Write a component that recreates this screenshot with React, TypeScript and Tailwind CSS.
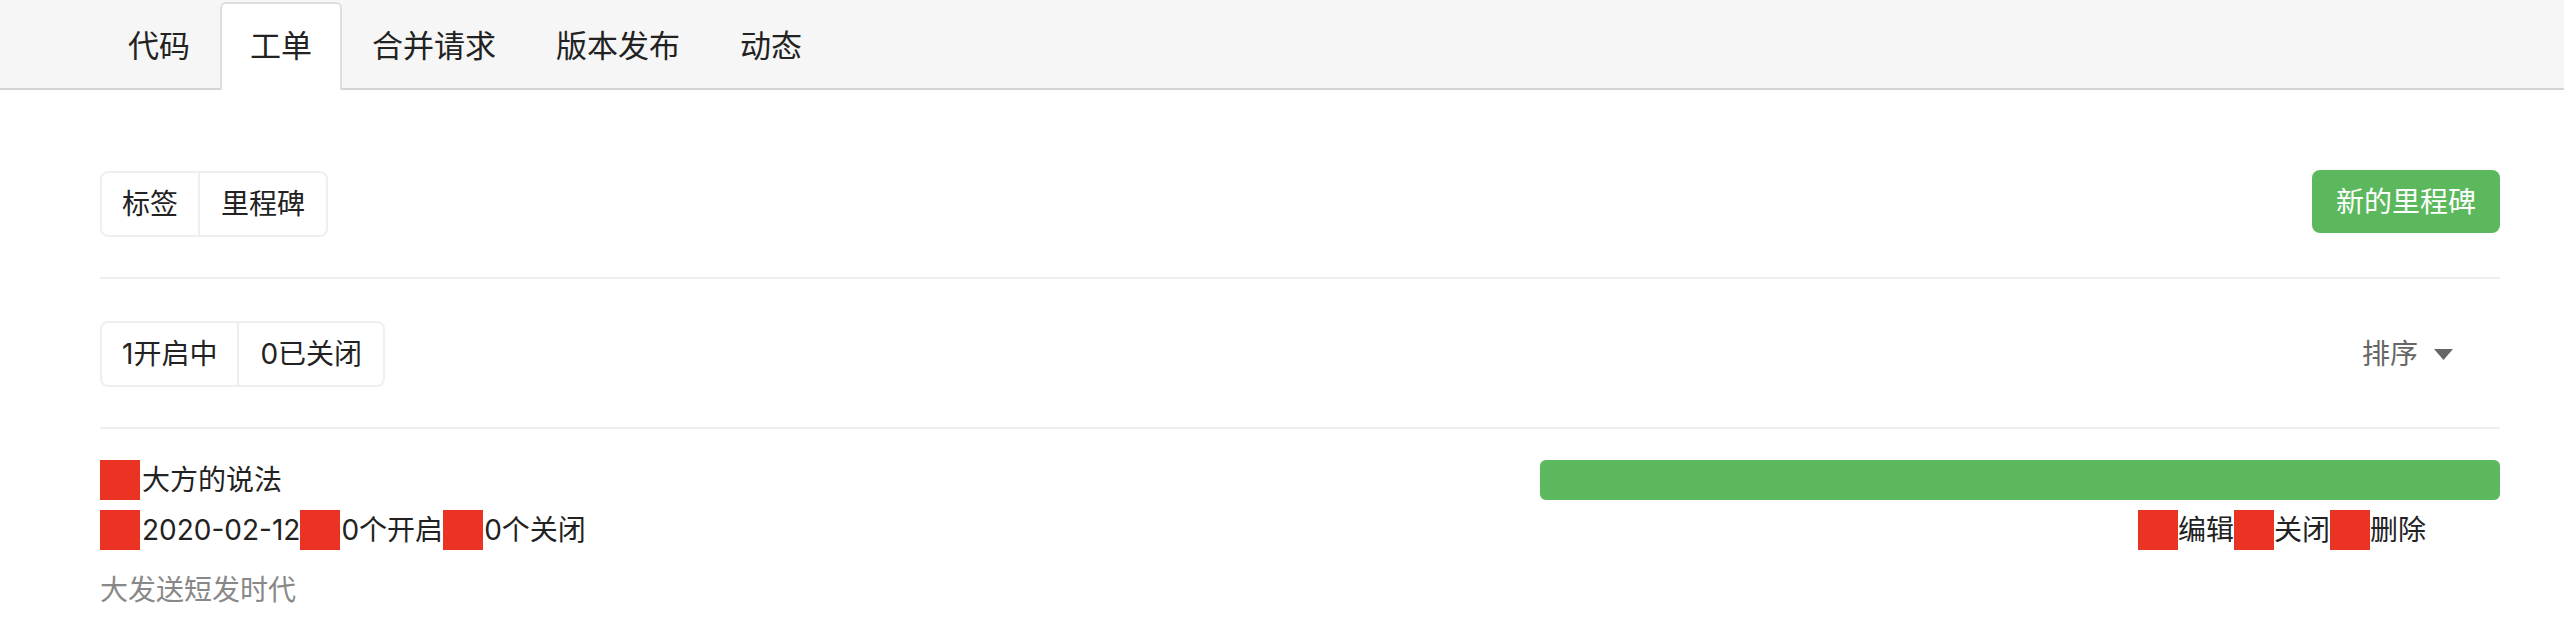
import React from "react";

const tabs = ["代码", "工单", "合并请求", "版本发布", "动态"];

function RedIcon() {
  return <span className="inline-block w-[40px] h-[40px] bg-[#ea3323] shrink-0" />;
}

export default function App() {
  return (
    <div className="min-h-[630px] bg-white text-[#222] font-['Inter','Noto_Sans_CJK_SC',sans-serif]">
      {/* top nav */}
      <div className="h-[90px] bg-[#f6f6f6] border-b-2 border-[#d4d4d4] flex items-end pl-[98px]">
        {tabs.map((t) => (
          <div
            key={t}
            className={
              t === "工单"
                ? "h-[88px] mb-[-2px] px-[28px] pb-[4px] flex items-center text-[31px] leading-none bg-white border-2 border-b-0 border-[#dedede] rounded-t-[6px]"
                : "h-[88px] mb-[-2px] px-[28px] pb-[4px] flex items-center text-[31px] leading-none border-2 border-b-0 border-transparent"
            }
          >
            {t}
          </div>
        ))}
      </div>

      <div className="pl-[100px] pr-[64px] pt-[81px] text-[28px] leading-none">
        {/* toolbar 1 */}
        <div className="flex justify-between items-start">
          <div className="flex h-[66px] border-2 border-[#efefef] rounded-[8px]">
            <div className="px-[20px] flex items-center border-r-2 border-[#efefef]">标签</div>
            <div className="px-[21px] flex items-center">里程碑</div>
          </div>
          <div className="-mt-px h-[63px] px-[24px] flex items-center bg-[#5cb85c] text-white rounded-[8px]">
            新的里程碑
          </div>
        </div>

        <div className="mt-[40px] h-[2px] bg-[#eeeeee]" />

        {/* toolbar 2 */}
        <div className="mt-[42px] flex justify-between items-center">
          <div className="flex h-[66px] border-2 border-[#efefef] rounded-[8px]">
            <div className="px-[20px] flex items-center border-r-2 border-[#efefef]">1开启中</div>
            <div className="px-[21px] flex items-center">0已关闭</div>
          </div>
          <div className="flex items-center gap-[16px] pr-[47px] text-[#666]">
            <span>排序</span>
            <svg width="19" height="11" viewBox="0 0 19 11">
              <path d="M0 0 H19 L9.5 11 Z" fill="#666" />
            </svg>
          </div>
        </div>

        <div className="mt-[40px] h-[2px] bg-[#eeeeee]" />

        {/* milestone row */}
        <div className="mt-[31px] grid grid-cols-[60%_40%]">
          <div>
            <div className="h-[40px] flex items-center">
              <RedIcon />
              <span className="ml-[2px]">大方的说法</span>
            </div>
            <div className="mt-[10px] h-[40px] flex items-center">
              <RedIcon />
              <span className="ml-[2px]">2020-02-12</span>
              <RedIcon />
              <span className="ml-[1px]">0个开启</span>
              <RedIcon />
              <span className="ml-[1px]">0个关闭</span>
            </div>
            <div className="mt-[20px] h-[40px] flex items-center text-[#888]">大发送短发时代</div>
          </div>
          <div>
            <div className="h-[40px] rounded-[6px] bg-[#5cb85c]" />
            <div className="mt-[10px] h-[40px] flex items-center justify-end pr-[74px]">
              <RedIcon />
              <span>编辑</span>
              <RedIcon />
              <span>关闭</span>
              <RedIcon />
              <span>删除</span>
            </div>
          </div>
        </div>
      </div>
    </div>
  );
}
